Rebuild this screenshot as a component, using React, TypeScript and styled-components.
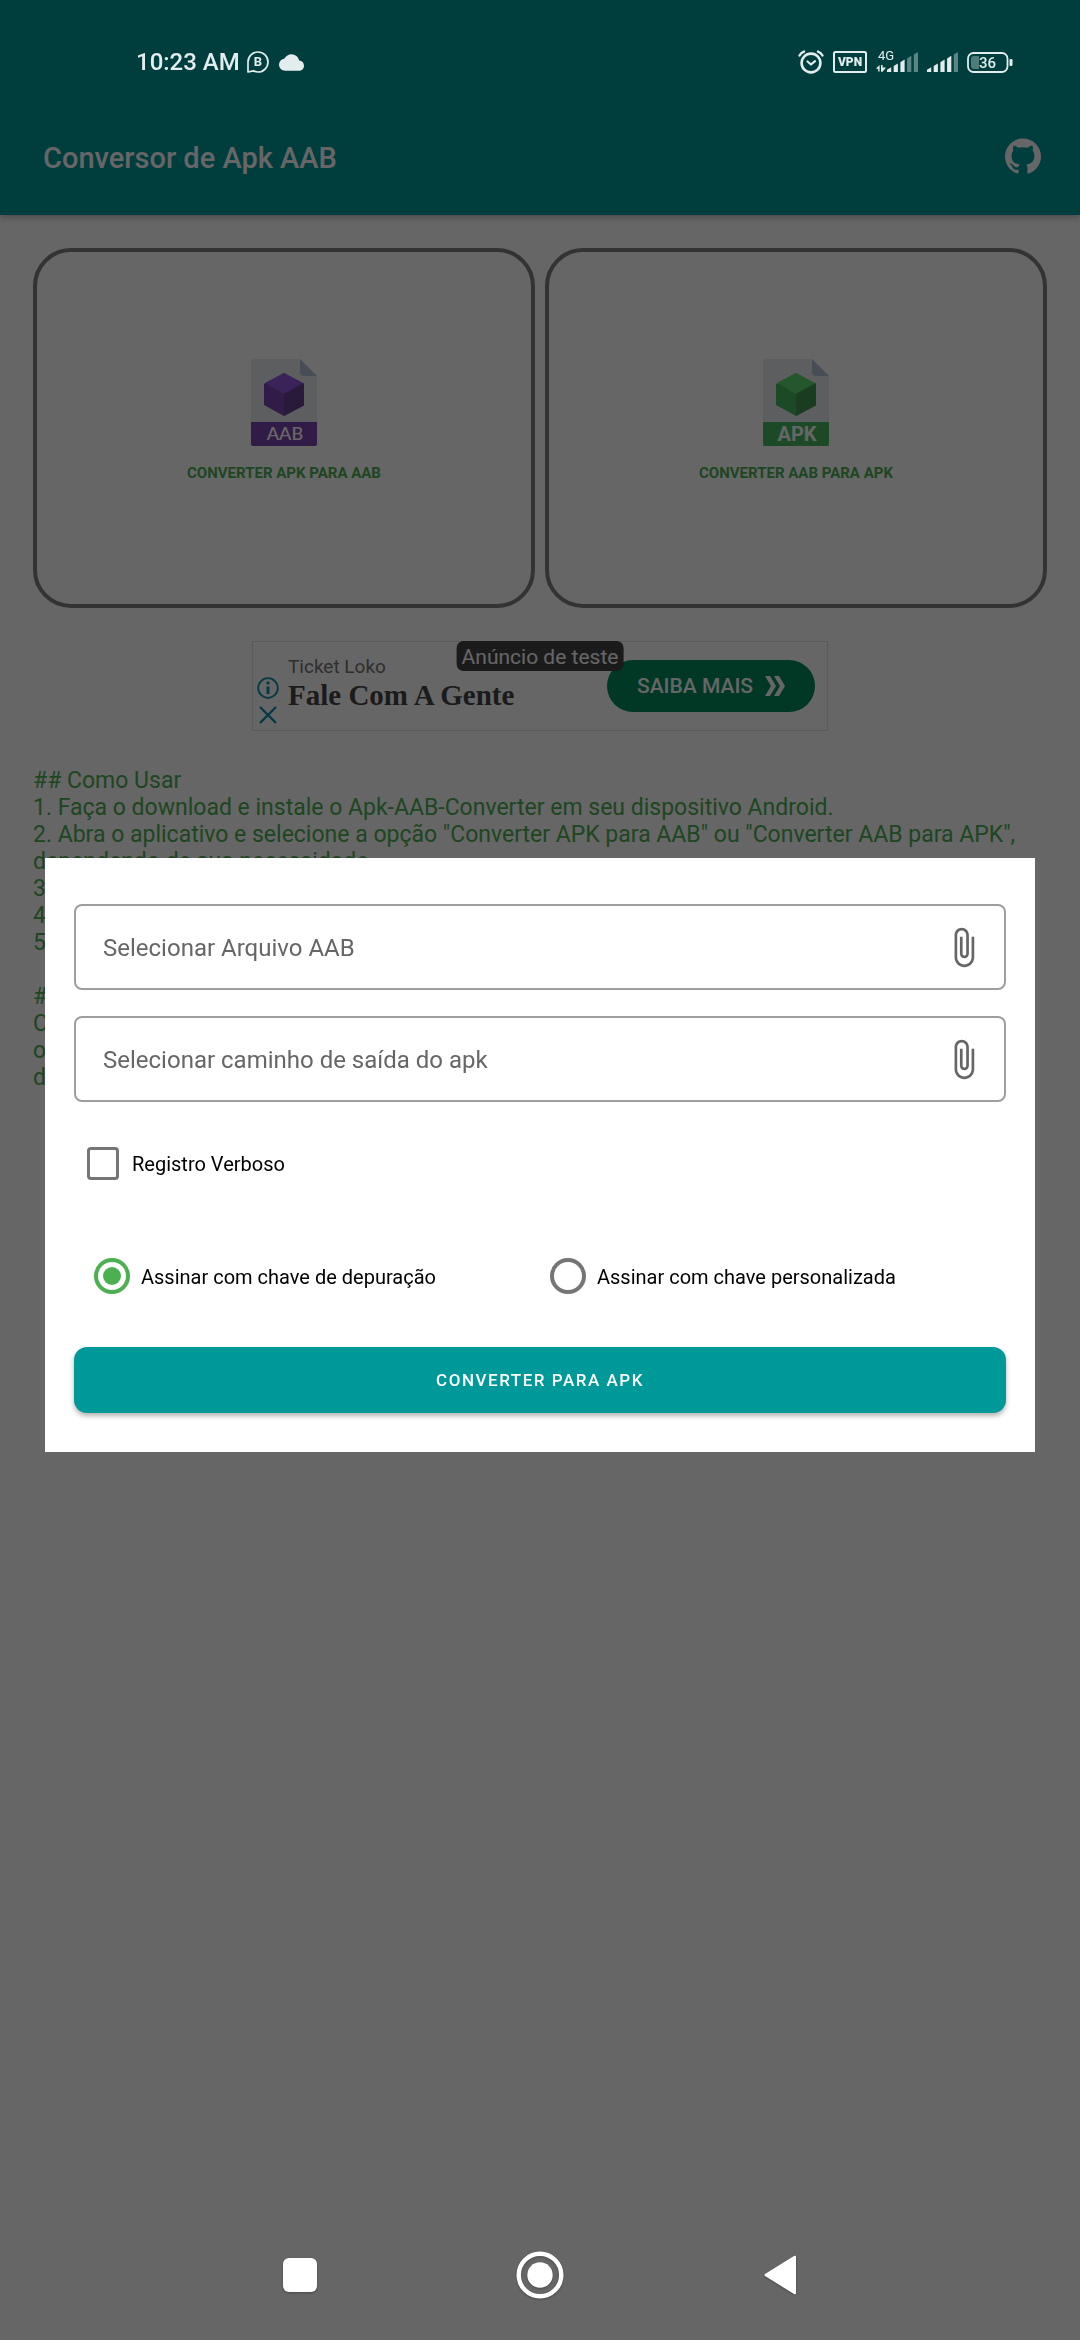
import React, { useState } from "react";
import styled, { createGlobalStyle } from "styled-components";
import { MdAttachFile, MdCloud } from "react-icons/md";
import { SiGithub } from "react-icons/si";

const GlobalStyle = createGlobalStyle`
  *, *::before, *::after { box-sizing: border-box; }
  body { margin: 0; background: #ffffff; font-family: Roboto, "Noto Sans", sans-serif; }
  button, input { font: inherit; }
`;

const green = "#4caf50";
const teal = "#009999";

/* ---------- app page ---------- */

const Page = styled.div`
  min-height: 100vh;
  background: #ffffff;
  color: ${green};
`;

const AppBar = styled.header`
  display: flex;
  align-items: center;
  justify-content: space-between;
  height: 215px;
  padding: 97px 39px 0 43px;
  background: ${teal};
  color: #ffffff;
  box-shadow: 0 2px 6px rgba(0, 0, 0, 0.3);
`;

const AppTitle = styled.h1`
  margin: 0;
  padding-top: 4px;
  font-size: 29px;
  line-height: 34px;
  font-weight: 500;
`;

const IconButton = styled.button`
  display: flex;
  padding: 0;
  border: 0;
  background: none;
  color: inherit;
  cursor: pointer;
`;

const Content = styled.main`
  display: flex;
  flex-direction: column;
  padding: 33px;
`;

const Cards = styled.div`
  display: grid;
  grid-template-columns: 1fr 1fr;
  gap: 10px;
`;

const Card = styled.button`
  display: flex;
  flex-direction: column;
  align-items: center;
  justify-content: center;
  gap: 18px;
  height: 360px;
  padding: 0 0 15px;
  border: 4px solid #808080;
  border-radius: 38px;
  background: none;
  color: ${green};
  font-size: 15px;
  line-height: 18px;
  font-weight: 700;
  text-transform: uppercase;
  cursor: pointer;
`;

const Ad = styled.section`
  position: relative;
  display: flex;
  align-items: center;
  align-self: center;
  width: 576px;
  max-width: 100%;
  height: 90px;
  margin-top: 33px;
  padding: 0 12px 0 4px;
  border: 1px solid #e0e0e0;
`;

const AdMarks = styled.div`
  display: flex;
  flex-direction: column;
  align-items: center;
  align-self: flex-end;
  gap: 6px;
  width: 22px;
  padding-bottom: 5px;
  color: #0c8fae;
`;

const AdTexts = styled.div`
  flex: 1;
  padding: 0 0 6px 9px;
`;

const AdBrand = styled.p`
  margin: 0;
  color: #757575;
  font-size: 19px;
  line-height: 24px;
`;

const AdHeadline = styled.p`
  margin: 0;
  color: #444444;
  font-family: "Liberation Serif", serif;
  font-size: 29px;
  line-height: 32px;
  font-weight: 700;
`;

const AdAction = styled.button`
  display: flex;
  align-items: center;
  justify-content: center;
  gap: 12px;
  width: 208px;
  height: 52px;
  padding: 0;
  border: 0;
  border-radius: 26px;
  background: #008a5c;
  color: #ffffff;
  font-size: 21px;
  line-height: 24px;
  font-weight: 500;
  cursor: pointer;
`;

const AdTag = styled.span`
  position: absolute;
  top: -1px;
  left: 50%;
  transform: translateX(-50%);
  padding: 3px 5px 1px;
  border-radius: 7px;
  background: #444444;
  color: #ffffff;
  font-size: 21px;
  line-height: 26px;
  white-space: nowrap;
`;

const Guide = styled.div`
  padding-top: 36px;
  font-size: 23px;
  line-height: 27px;
`;

const GuideLine = styled.p`
  margin: 0;
  min-height: 27px;
`;

/* ---------- window layer ---------- */

const Overlay = styled.div`
  position: fixed;
  inset: 0;
  display: grid;
  grid-template-rows: 100px 1fr 130px;
  background: rgba(0, 0, 0, 0.6);
`;

const StatusBar = styled.div`
  display: flex;
  align-items: center;
  justify-content: space-between;
  padding: 24px 67px 0 136px;
  color: #e3eded;
  font-size: 24px;
  line-height: 28px;
  font-weight: 500;
`;

const StatusGroup = styled.div<{ $gap: number }>`
  display: flex;
  align-items: center;
  gap: ${(p) => p.$gap}px;
`;

const DialogArea = styled.div`
  display: flex;
  align-items: center;
  padding: 0 45px;
`;

const Dialog = styled.form`
  display: flex;
  flex-direction: column;
  flex: 1;
  padding: 46px 29px 39px;
  background: #ffffff;
`;

const Fields = styled.div`
  display: flex;
  flex-direction: column;
  gap: 26px;
`;

const Field = styled.label`
  display: flex;
  align-items: center;
  height: 86px;
  padding: 0 19px 0 27px;
  border: 2px solid #9e9e9e;
  border-radius: 8px;
  color: #666666;
`;

const FieldInput = styled.input`
  flex: 1;
  min-width: 0;
  padding: 2px 0 0;
  border: 0;
  outline: 0;
  background: none;
  color: #212121;
  font-size: 24px;
  line-height: 28px;
  &::placeholder { color: #666666; opacity: 1; }
`;

const Choice = styled.label<{ $gap: number }>`
  display: flex;
  align-items: center;
  gap: ${(p) => p.$gap}px;
  height: 70px;
  color: #000000;
  font-size: 20px;
  line-height: 24px;
`;

const ChoiceText = styled.span`
  padding-top: 2px;
`;

const CheckRow = styled.div`
  margin-top: 26px;
  padding-left: 13px;
`;

const RadioRow = styled.div`
  display: grid;
  grid-template-columns: 1fr 1fr;
  margin-top: 43px;
  padding-left: 20px;
`;

const Checkbox = styled.input`
  appearance: none;
  width: 32px;
  height: 33px;
  margin: 0;
  border: 3px solid #757575;
  border-radius: 4px;
  &:checked { border-color: ${green}; background: ${green}; }
`;

const Radio = styled.input`
  appearance: none;
  display: grid;
  place-items: center;
  width: 36px;
  height: 36px;
  margin: 0;
  border: 4px solid #757575;
  border-radius: 50%;
  &:checked { border-color: ${green}; }
  &:checked::before {
    content: "";
    width: 18px;
    height: 18px;
    border-radius: 50%;
    background: ${green};
  }
`;

const Submit = styled.button`
  height: 66px;
  margin-top: 36px;
  padding: 0;
  border: 0;
  border-radius: 13px;
  background: ${teal};
  color: #ffffff;
  font-size: 17px;
  line-height: 20px;
  font-weight: 500;
  letter-spacing: 0.09em;
  text-transform: uppercase;
  box-shadow: 0 3px 5px rgba(0, 0, 0, 0.3);
  cursor: pointer;
`;

const NavBar = styled.nav`
  display: grid;
  grid-template-columns: 240px 240px 240px;
  justify-content: center;
  justify-items: center;
  align-items: center;
  color: #ffffff;
`;

const NavIcon = styled.svg`
  filter: drop-shadow(0 1px 1px rgba(0, 0, 0, 0.3));
`;

/* ---------- drawings ---------- */

type FileArt = { body: string; top: string; side: string; tag: string };

function FileIcon({ body, top, side, tag }: FileArt) {
  const wide = tag === "APK";
  return (
    <svg width="66" height="87" viewBox="0 0 66 87" aria-hidden="true">
      <path d="M2 0H49L66 17V64H0V2Q0 0 2 0Z" fill="#e9ebf0" />
      <path d="M49 0L66 17H53Q49 17 49 13Z" fill="#afc0d2" />
      <path d="M33 14L53 25V46L33 57L13 46V25Z" fill={body} />
      <path d="M33 14L52 24L33 35L14 24Z" fill={top} />
      <path d="M33 35L53 24V46Q53 47 52 47L33 57Z" fill={side} />
      <path d="M0 63H66V85Q66 87 64 87H2Q0 87 0 85Z" fill={body} />
      <text
        x="34"
        y={wide ? 82 : 81}
        textAnchor="middle"
        fill="#ffffff"
        fontFamily={wide ? "Roboto, sans-serif" : "Lato, sans-serif"}
        fontSize={wide ? 20 : 18}
        fontWeight={wide ? 700 : 600}
      >
        {tag}
      </text>
    </svg>
  );
}

const ChatIcon = () => (
  <svg width="22" height="22" viewBox="0 0 22 22" fill="none" stroke="currentColor">
    <path d="M1 21V11A10 10 0 1 1 11 21Q8.5 21 6.5 19.8Z" strokeWidth="1.7" strokeLinejoin="round" />
    <text x="11" y="15.4" textAnchor="middle" fontSize="13" fontWeight="700" fill="currentColor" stroke="none">B</text>
  </svg>
);

const AlarmIcon = () => (
  <svg width="26" height="24" viewBox="0 0 26 24" fill="none" stroke="currentColor" strokeLinecap="round">
    <circle cx="13" cy="13" r="9.4" strokeWidth="2.6" />
    <path d="M9.5 11.5L13 14.5L17 11.2" strokeWidth="2.2" strokeLinejoin="round" />
    <path d="M1.5 5.5Q3 2.8 6 1.6M24.5 5.5Q23 2.8 20 1.6" strokeWidth="2.4" />
  </svg>
);

const VpnIcon = () => (
  <svg width="34" height="22" viewBox="0 0 34 22">
    <rect x="1" y="1" width="32" height="20" rx="1.5" fill="none" stroke="currentColor" strokeWidth="2" />
    <text x="17" y="15.3" textAnchor="middle" fontSize="12" fontWeight="900" fill="currentColor">VPN</text>
  </svg>
);

const Bars = ({ lit }: { lit: number }) => (
  <>
    {[0, 1, 2, 3, 4].map((i) => {
      const x = i * 6.7;
      const top = 18 - i * 3.8;
      return (
        <path
          key={i}
          d={`M${x} 22V${top + 1.8}L${x + 4.2} ${top - 0.8}V22Z`}
          fill="currentColor"
          opacity={i < lit ? 1 : 0.4}
        />
      );
    })}
  </>
);

const MobileIcon = () => (
  <svg width="42" height="26" viewBox="0 0 42 26">
    <text x="2" y="11" fontSize="13" fontWeight="400" fill="currentColor">4G</text>
    <path d="M0 19.5L3.6 16V22.5H2.2V20ZM5 16H6.6V18.5H10L6.6 22.8H5Z" fill="currentColor" />
    <g transform="translate(11 1)"><Bars lit={3} /></g>
  </svg>
);

const SignalIcon = () => (
  <svg width="31" height="26" viewBox="0 0 31 26">
    <g transform="translate(0 1)"><Bars lit={4} /></g>
  </svg>
);

const BatteryIcon = () => (
  <svg width="46" height="21" viewBox="0 0 46 21">
    <rect x="1" y="1" width="39.5" height="19" rx="5.5" fill="none" stroke="currentColor" strokeWidth="1.8" />
    <path d="M7 4H12V17H7Q4 17 4 14V7Q4 4 7 4Z" fill="currentColor" opacity="0.35" />
    <rect x="42.5" y="7" width="3" height="7" rx="1.2" fill="currentColor" />
    <text x="20.5" y="15.8" textAnchor="middle" fontSize="15" fontWeight="500" fill="currentColor">36</text>
  </svg>
);

const steps = [
  "## Como Usar",
  "1. Faça o download e instale o Apk-AAB-Converter em seu dispositivo Android.",
  '2. Abra o aplicativo e selecione a opção "Converter APK para AAB" ou "Converter AAB para APK", dependendo de sua necessidade.',
  "3",
  "4",
  "5",
  "",
  "#",
  "C",
  "o",
  "d",
];

export default function App() {
  const [verbose, setVerbose] = useState(false);
  const [signing, setSigning] = useState("debug");

  return (
    <>
      <GlobalStyle />
      <Page>
        <AppBar>
          <AppTitle>Conversor de Apk AAB</AppTitle>
          <IconButton aria-label="GitHub">
            <SiGithub size={36} />
          </IconButton>
        </AppBar>
        <Content>
          <Cards>
            <Card>
              <FileIcon body="#7b44b2" top="#9158de" side="#673f91" tag="AAB" />
              Converter APK para AAB
            </Card>
            <Card>
              <FileIcon body="#46b95f" top="#5ada6c" side="#419855" tag="APK" />
              Converter AAB para APK
            </Card>
          </Cards>
          <Ad>
            <AdMarks>
              <IconButton aria-label="Info">
                <svg width="22" height="22" viewBox="0 0 22 22" fill="none" stroke="currentColor">
                  <circle cx="11" cy="11" r="9.8" strokeWidth="1.8" />
                  <path d="M11 9.5V17" strokeWidth="3" />
                  <circle cx="11" cy="6" r="1.7" fill="currentColor" stroke="none" />
                </svg>
              </IconButton>
              <IconButton aria-label="Fechar">
                <svg width="20" height="20" viewBox="0 0 20 20" stroke="currentColor">
                  <path d="M2 2L18 18M18 2L2 18" strokeWidth="2.4" />
                </svg>
              </IconButton>
            </AdMarks>
            <AdTexts>
              <AdBrand>Ticket Loko</AdBrand>
              <AdHeadline>Fale Com A Gente</AdHeadline>
            </AdTexts>
            <AdAction>
              SAIBA MAIS
              <svg width="20" height="20" viewBox="0 0 20 20" fill="currentColor">
                <path d="M0 0H5L11 10L5 20H0L6 10ZM9 0H14L20 10L14 20H9L15 10Z" />
              </svg>
            </AdAction>
            <AdTag>Anúncio de teste</AdTag>
          </Ad>
          <Guide>
            {steps.map((line, i) => (
              <GuideLine key={i}>{line}</GuideLine>
            ))}
          </Guide>
        </Content>
      </Page>

      <Overlay>
        <StatusBar>
          <StatusGroup $gap={7}>
            10:23 AM
            <StatusGroup $gap={10}>
              <ChatIcon />
              <MdCloud size={25} />
            </StatusGroup>
          </StatusGroup>
          <StatusGroup $gap={9}>
            <AlarmIcon />
            <VpnIcon />
            <MobileIcon />
            <SignalIcon />
            <BatteryIcon />
          </StatusGroup>
        </StatusBar>

        <DialogArea>
          <Dialog role="dialog" aria-modal="true" onSubmit={(e) => e.preventDefault()}>
            <Fields>
              <Field>
                <FieldInput aria-label="Selecionar Arquivo AAB" placeholder="Selecionar Arquivo AAB" />
                <IconButton type="button" aria-label="Anexar arquivo">
                  <MdAttachFile size={43} />
                </IconButton>
              </Field>
              <Field>
                <FieldInput
                  aria-label="Selecionar caminho de saída do apk"
                  placeholder="Selecionar caminho de saída do apk"
                />
                <IconButton type="button" aria-label="Anexar caminho">
                  <MdAttachFile size={43} />
                </IconButton>
              </Field>
            </Fields>
            <CheckRow>
              <Choice $gap={13}>
                <Checkbox type="checkbox" checked={verbose} onChange={(e) => setVerbose(e.target.checked)} />
                <ChoiceText>Registro Verboso</ChoiceText>
              </Choice>
            </CheckRow>
            <RadioRow>
              <Choice $gap={11}>
                <Radio type="radio" name="key" checked={signing === "debug"} onChange={() => setSigning("debug")} />
                <ChoiceText>Assinar com chave de depuração</ChoiceText>
              </Choice>
              <Choice $gap={11}>
                <Radio type="radio" name="key" checked={signing === "custom"} onChange={() => setSigning("custom")} />
                <ChoiceText>Assinar com chave personalizada</ChoiceText>
              </Choice>
            </RadioRow>
            <Submit type="submit">Converter para APK</Submit>
          </Dialog>
        </DialogArea>

        <NavBar>
          <IconButton aria-label="Recentes">
            <NavIcon width="34" height="34" viewBox="0 0 34 34" fill="currentColor">
              <rect width="34" height="34" rx="6" />
            </NavIcon>
          </IconButton>
          <IconButton aria-label="Início">
            <NavIcon width="48" height="48" viewBox="0 0 48 48">
              <circle cx="24" cy="24" r="21.3" fill="none" stroke="currentColor" strokeWidth="4.4" />
              <circle cx="24" cy="24" r="12.7" fill="currentColor" />
            </NavIcon>
          </IconButton>
          <IconButton aria-label="Voltar">
            <NavIcon width="32" height="40" viewBox="0 0 32 40" fill="currentColor">
              <path d="M30 1Q32 0 32 2V38Q32 40 30 39L1 21Q0 20 1 19Z" />
            </NavIcon>
          </IconButton>
        </NavBar>
      </Overlay>
    </>
  );
}
